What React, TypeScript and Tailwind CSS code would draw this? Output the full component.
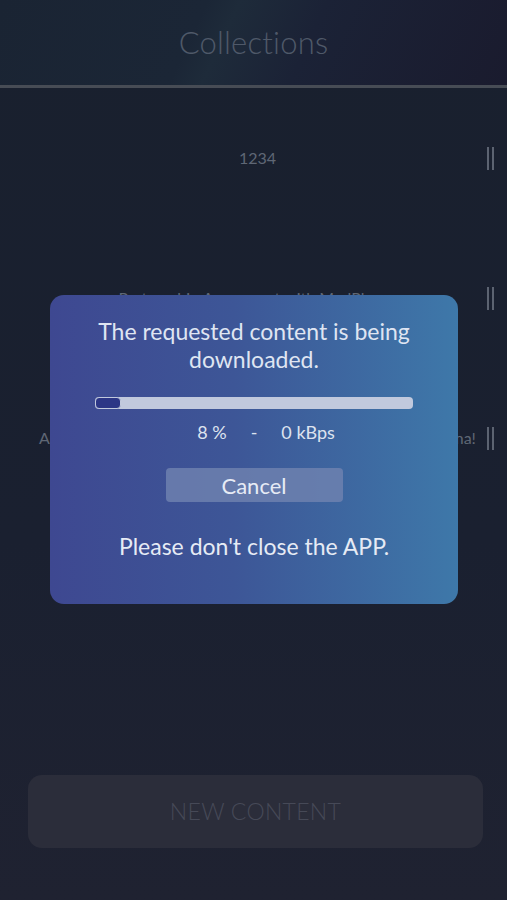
import { useState } from "react";

const ROWS = [
  { id: 1, title: "1234" },
  { id: 2, title: "Partnership Agreement with MedPharm" },
  { id: 3, title: "A legújabb tartalmak és ajánlatok már elérhetők, nézd meg ma!" },
];

function DragHandle() {
  return (
    <div className="flex gap-[3px]">
      <span className="h-[23px] w-[2px] bg-[#5c6371]" />
      <span className="h-[23px] w-[2px] bg-[#5c6371]" />
    </div>
  );
}

export default function App() {
  const [progress] = useState(8);

  return (
    <div className="relative flex h-[900px] w-full flex-col overflow-hidden bg-[linear-gradient(180deg,#19202e_0%,#1a2030_60%,#1f2231_100%)] font-['Lato','Open_Sans',sans-serif]">
      {/* header */}
      <header className="flex h-[88px] items-center justify-center border-b-[3px] border-[#474c55] bg-[linear-gradient(115deg,#1a2433_0%,#1b2636_38%,#1e2b3a_44%,#1b2236_60%,#1a1b2e_100%)]">
        <h1 className="text-[31px] font-light tracking-[0.2px] text-[#4f5969]">Collections</h1>
      </header>

      {/* list */}
      <ul className="flex flex-col">
        {ROWS.map((row) => (
          <li key={row.id} className="flex h-[140px] items-center pl-[28px] pr-[13px]">
            <span className="flex-1 whitespace-nowrap text-center text-[16px] text-[#5f6775]">{row.title}</span>
            <DragHandle />
          </li>
        ))}
      </ul>

      <div className="mt-auto pb-[52px] pl-[28px] pr-[24px]">
        <button className="flex h-[73px] w-full items-center justify-center rounded-[14px] bg-[#2b2d3a] text-[23px] font-light tracking-[0.3px] text-[#464957]">
          NEW CONTENT
        </button>
      </div>

      {/* download modal */}
      <div className="absolute left-[50px] top-[295px] flex h-[309px] w-[408px] flex-col items-center rounded-[14px] bg-[linear-gradient(90deg,#3e4891_0%,#3d5697_45%,#3e78a9_100%)] px-[24px] pt-[22px] text-[#dfe5f2]">
        <p className="text-center text-[23px] leading-[28px]">
          The requested content is being downloaded.
        </p>
        <div className="mt-[24px] h-[12px] w-[318px] overflow-hidden rounded-[4px] bg-[#c1c9dd]">
          <div
            className="h-full rounded-[4px] border-[1.5px] border-[#c1c9dd] bg-[#2c3686]"
            style={{ width: `${Math.max(progress * 3.2, 26)}px` }}
          />
        </div>
        <div className="mt-[10px] flex items-center gap-[20px] pl-[24px] text-[18px] text-[#dde3ef]">
          <span>{progress} %</span>
          <span className="px-[4px]">-</span>
          <span>0 kBps</span>
        </div>
        <button className="mt-[22px] flex h-[34px] w-[177px] items-center justify-center rounded-[4px] bg-[#7083b0]/80 text-[22px] text-[#e6ebf5]">
          Cancel
        </button>
        <p className="mt-[27px] text-[23px] text-[#e6ebf5]">Please don't close the APP.</p>
      </div>
    </div>
  );
}
